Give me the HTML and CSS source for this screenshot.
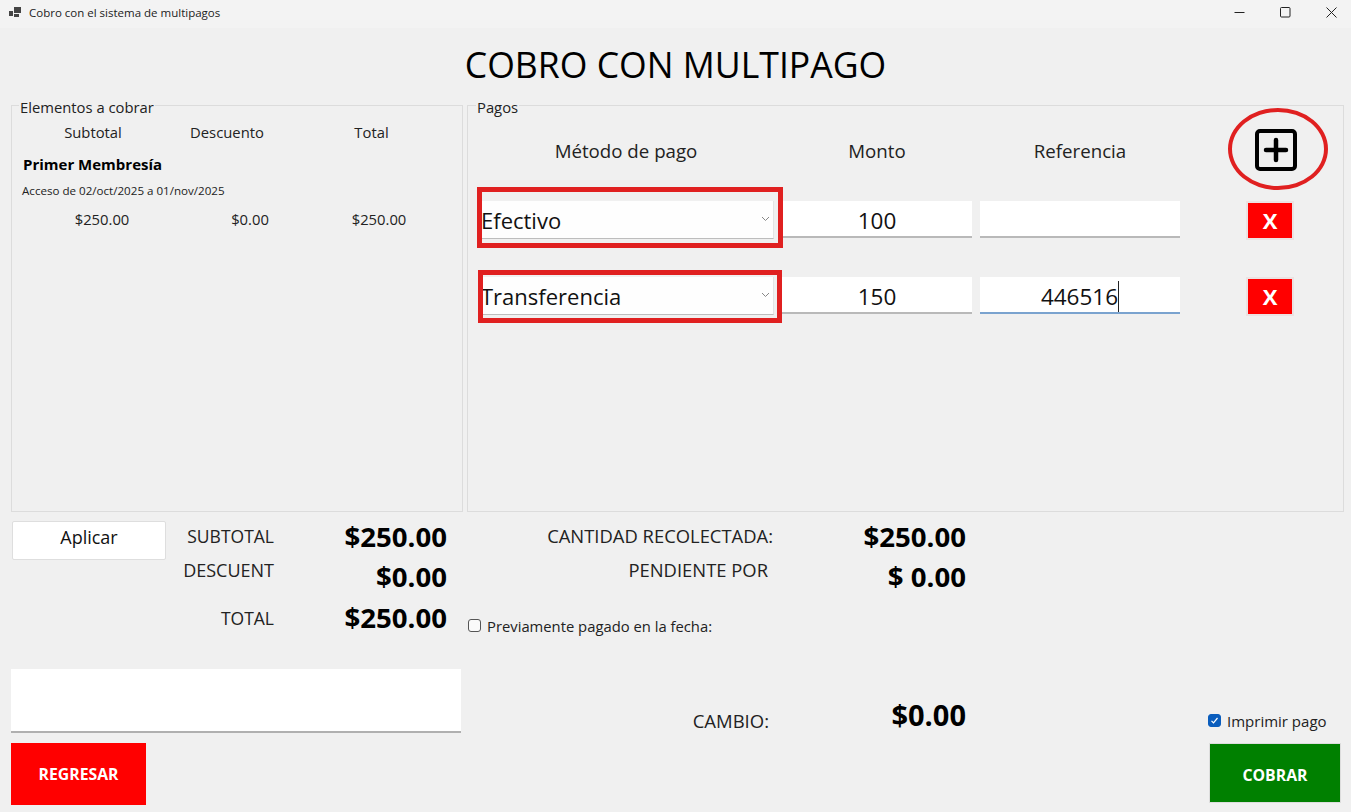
FILE: index.html
```html
<!DOCTYPE html>
<html lang="es">
<head>
<meta charset="utf-8">
<title>Cobro con el sistema de multipagos</title>
<link rel="stylesheet" href="styles.css">
</head>
<body>
<div class="app">
  <header class="titlebar">
    <svg class="app-icon" width="13" height="12" viewBox="0 0 13 12"><rect x="0" y="4" width="4" height="5" fill="#444"/><rect x="5" y="0" width="7" height="6" fill="#444"/><rect x="5" y="7" width="5" height="3" fill="#444"/></svg>
    <span class="titlebar-text">Cobro con el sistema de multipagos</span>
    <div class="win-controls">
      <svg width="11" height="11" viewBox="0 0 11 11"><path d="M0.5 5.5h10" stroke="#222" fill="none"/></svg>
      <svg width="11" height="11" viewBox="0 0 11 11"><rect x="0.5" y="0.5" width="9.5" height="9.5" rx="1" stroke="#222" fill="none"/></svg>
      <svg width="11" height="11" viewBox="0 0 11 11"><path d="M0.5 0.5l10 10M10.5 0.5l-10 10" stroke="#222" fill="none"/></svg>
    </div>
  </header>

  <h1 class="heading">COBRO CON MULTIPAGO</h1>

  <div class="panels">
    <fieldset class="panel panel-items">
      <legend>Elementos a cobrar</legend>
      <div class="items-head"><span>Subtotal</span><span>Descuento</span><span>Total</span></div>
      <div class="item-name">Primer Membresía</div>
      <div class="item-desc">Acceso de 02/oct/2025 a 01/nov/2025</div>
      <div class="items-vals"><span>$250.00</span><span>$0.00</span><span>$250.00</span></div>
    </fieldset>

    <fieldset class="panel panel-pay">
      <legend>Pagos</legend>
      <div class="pay-head">
        <span>Método de pago</span><span>Monto</span><span>Referencia</span>
        <div class="add-cell">
          <svg class="add-icon" width="42" height="42" viewBox="0 0 42 42"><rect x="2" y="2" width="38" height="38" rx="3" fill="none" stroke="#000" stroke-width="4"/><path d="M21 11v20M11 21h20" stroke="#000" stroke-width="4.5" stroke-linecap="round" fill="none"/></svg>
          <span class="ring"></span>
        </div>
      </div>
      <div class="pay-row">
        <div class="combo">
          <span>Efectivo</span>
          <svg class="chev" width="9" height="6" viewBox="0 0 9 6"><path d="M1 1l3.5 3.5L8 1" stroke="#888" fill="none"/></svg>
          <span class="mark mark-a"></span>
        </div>
        <div class="field">100</div>
        <div class="field"></div>
        <button class="del">X</button>
      </div>
      <div class="pay-row pay-row-2">
        <div class="combo">
          <span>Transferencia</span>
          <svg class="chev" width="9" height="6" viewBox="0 0 9 6"><path d="M1 1l3.5 3.5L8 1" stroke="#888" fill="none"/></svg>
          <span class="mark mark-b"></span>
        </div>
        <div class="field">150</div>
        <div class="field field-focus"><span class="caret-text">446516</span></div>
        <button class="del">X</button>
      </div>
    </fieldset>
  </div>

  <div class="bottom">
    <div class="bottom-left">
      <div class="totals">
        <button class="apply">Aplicar</button>
        <span class="lbl">SUBTOTAL</span><span class="amt">$250.00</span>
        <span class="spacer"></span>
        <span class="lbl lbl-up lbl-wide">DESCUENT</span><span class="amt amt-down">$0.00</span>
        <span class="spacer"></span>
        <span class="lbl lbl-down">TOTAL</span><span class="amt">$250.00</span>
      </div>
      <div class="notes"></div>
      <button class="btn-back">REGRESAR</button>
    </div>

    <div class="bottom-right">
      <div class="collect">
        <span class="lbl">CANTIDAD RECOLECTADA:</span><span class="amt">$250.00</span>
        <span class="lbl lbl-up lbl-in">PENDIENTE POR</span><span class="amt amt-down">$ 0.00</span>
      </div>
      <label class="check prev"><span class="box"></span>Previamente pagado en la fecha:</label>
      <div class="footer-row">
        <div class="change">
          <span class="lbl">CAMBIO:</span><span class="amt">$0.00</span>
        </div>
        <div class="actions">
          <label class="check print"><span class="box box-on"><svg width="9" height="9" viewBox="0 0 9 9"><path d="M1.5 4.8l2 2L7.5 2" stroke="#fff" stroke-width="1.2" fill="none"/></svg></span>Imprimir pago</label>
          <button class="btn-pay">COBRAR</button>
        </div>
      </div>
    </div>
  </div>
</div>
</body>
</html>
```

FILE: styles.css
```css
* { box-sizing: border-box; }
html, body { margin: 0; height: 100%; }
body { background: #f0f0f0; font-family: "Open Sans", "Noto Sans", sans-serif; color: #1a1a1a; overflow: hidden; }
.app { width: 1351px; height: 812px; }
button { font-family: inherit; }

.titlebar { height: 28px; background: #f3f3f3; display: flex; align-items: center; padding-left: 9px; }
.app-icon { margin-right: 7px; margin-top: -3px; }
.titlebar-text { font-size: 11.5px; color: #222; margin-top: -3px; }
.win-controls { margin-left: auto; display: flex; gap: 35px; padding-right: 14px; margin-top: -4px; }

.heading { margin: 0; height: 67px; padding-top: 12px; text-align: center; font-size: 35.6px; font-weight: 400; line-height: 48px; color: #000; }

.panels { display: grid; grid-template-columns: 452px 877px; gap: 4px; padding-left: 11px; height: 417px; }
.panel { margin: 0; padding: 0; border: 1px solid #dcdcdc; min-width: 0; height: 417px; }
.panel legend { font-size: 14.8px; line-height: 16px; padding: 4px 1px 0; margin-left: 7px; color: #222; }

.items-head, .items-vals { display: grid; font-size: 14.8px; text-align: center; color: #222; }
.items-head { grid-template-columns: 162px 106px 183px; line-height: 20px; margin-top: 7px; }
.items-vals { grid-template-columns: 180px 116px 142px; line-height: 20px; margin-top: 10px; }
.item-name { font-weight: 700; font-size: 15px; line-height: 20px; margin: 12px 0 0 11px; color: #000; }
.item-desc { font-size: 11.6px; line-height: 16px; margin: 9px 0 0 10px; color: #222; }

.panel-pay { padding-left: 13px; }
.panel-pay legend { margin-left: -5px; }
.pay-row { display: grid; grid-template-columns: 293px 190px 200px 106px; column-gap: 8px; }
.pay-head { display: grid; grid-template-columns: 293px 190px 200px 120px; column-gap: 8px; height: 60px; margin-top: 5px; font-size: 18.7px; align-items: center; text-align: center; color: #222; }
.pay-head > span:first-child { margin-right: 3px; }
.add-cell { position: relative; justify-self: start; width: 60px; height: 60px; margin: 0 0 0 58px; display: flex; align-items: center; justify-content: center; }
.ring { position: absolute; left: -18px; top: -12px; width: 100px; height: 82px; border: 4px solid #e02020; border-radius: 50%; }

.pay-row { height: 38px; align-items: start; margin-top: 21px; }
.pay-row-2 { margin-top: 38px; }
.combo { position: relative; height: 38px; background: #fefefe; border-bottom: 1px solid #bdbdbd; border-right: 1px solid #e4e4e4; display: flex; align-items: center; justify-content: space-between; padding: 1px 3px 0 0; font-size: 22px; color: #111; }
.chev { margin-top: -3px; }
.mark { position: absolute; border: 5px solid #e02020; }
.mark-a { left: -4px; right: -10px; top: -14px; bottom: -10px; }
.mark-b { left: -3px; right: -9px; top: -7px; bottom: -9px; }

.field { height: 37px; background: #fff; border-bottom: 2px solid #b9b9b9; font-size: 22.5px; line-height: 40px; text-align: center; color: #111; }
.field-focus { border-bottom-color: #7aa3cf; }
.caret-text { border-right: 1px solid #222; padding-right: 0; }

.del { margin: 0 0 0 58px; width: 48px; height: 39px; padding: 0 0 2px; border: 2px solid #ece2e2; background: #f00; color: #fff; font-weight: 700; font-size: 22px; line-height: 30px; }

.bottom { display: grid; grid-template-columns: 456px 1fr; }
.bottom-left { padding: 9px 0 0 11px; }
.totals { display: grid; grid-template-columns: 156px 107px 173px; grid-template-rows: 38px 43px 41px; }
.totals .apply { margin-left: 1px; width: 154px; height: 39px; border: 1px solid #dedede; border-radius: 2px; background: #fff; font-size: 18px; padding: 0 0 7px; color: #111; }
.lbl { font-size: 17.5px; text-align: right; line-height: 30px; color: #222; }
.amt { font-size: 27.6px; font-weight: 700; text-align: right; line-height: 32px; color: #000; margin-top: -1px; }
.lbl-up { margin-top: -4px; }
.lbl-down { margin-top: 1px; }
.lbl-wide { font-size: 18px; }
.amt-down { margin-top: 1px; }
.notes { margin-top: 26px; width: 450px; height: 64px; background: #fff; border-bottom: 2px solid #b0b0b0; }
.btn-back { margin-top: 10px; display: block; width: 135px; height: 62px; border: 0; background: #f00; color: #fff; font-weight: 700; font-size: 15.8px; padding: 0; }

.bottom-right { padding: 9px 0 0 12px; }
.collect { display: grid; grid-template-columns: 305px 193px; grid-template-rows: 38px 40px; }
.collect .lbl { font-size: 18.4px; }
.lbl-in { margin-right: 5px; }
.check { display: flex; align-items: center; font-size: 14.8px; color: #222; }
.box { width: 13px; height: 13px; border: 1px solid #555; border-radius: 3px; background: #fafafa; margin: -2px 6px 0 0; display: flex; align-items: center; justify-content: center; }
.box-on { background: #0a5dbd; border-color: #0a5dbd; }
.prev { margin-top: 8px; height: 38px; }
.footer-row { display: flex; justify-content: space-between; align-items: flex-end; height: 158px; padding-right: 10px; }
.change { display: grid; grid-template-columns: 301px 197px; align-self: flex-start; padding-top: 55px; }
.change .lbl { font-size: 18.5px; line-height: 36px; margin-top: 3px; }
.change .amt { font-size: 29px; }
.actions { display: flex; flex-direction: column; align-items: flex-end; gap: 12px; }
.print { width: 133px; font-size: 15px; justify-content: flex-start; }
.btn-pay { width: 132px; height: 60px; border: 1px solid #ddd; background: #008000; color: #fff; font-weight: 700; font-size: 15.8px; padding: 3px 0 0; }
```
